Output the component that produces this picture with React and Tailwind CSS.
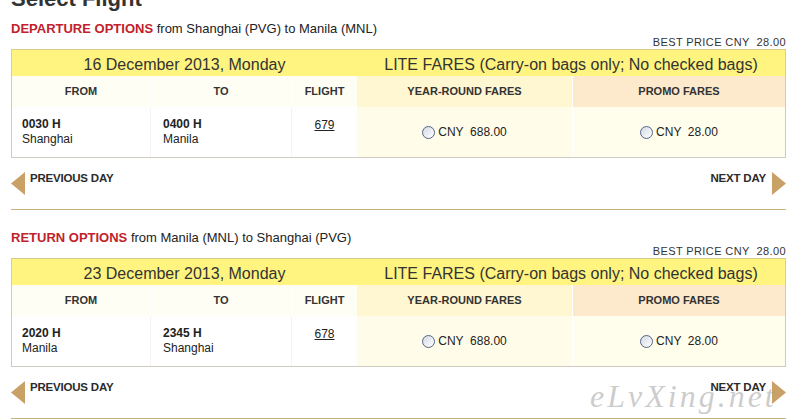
import React from 'react';

const sections = [
  {
    label: 'DEPARTURE OPTIONS',
    route: 'from Shanghai (PVG) to Manila (MNL)',
    date: '16 December 2013, Monday',
    dep: '0030 H',
    depCity: 'Shanghai',
    arr: '0400 H',
    arrCity: 'Manila',
    flight: '679',
  },
  {
    label: 'RETURN OPTIONS',
    route: 'from Manila (MNL) to Shanghai (PVG)',
    date: '23 December 2013, Monday',
    dep: '2020 H',
    depCity: 'Manila',
    arr: '2345 H',
    arrCity: 'Shanghai',
    flight: '678',
  },
];

const cols = 'grid grid-cols-[138px_141px_66px_215px_1fr]';

function Radio() {
  return (
    <span className="inline-block w-[13px] h-[13px] rounded-full border border-[#52668a] bg-linear-to-br from-[#d3d9e4] to-white shrink-0" />
  );
}

function Arrow({ dir }) {
  return (
    <svg width="14" height="23" viewBox="0 0 14 23" className="shrink-0">
      {dir === 'left' ? (
        <polygon points="14,0 14,23 0,11.5" fill="#c9a065" />
      ) : (
        <polygon points="0,0 0,23 14,11.5" fill="#c9a065" />
      )}
    </svg>
  );
}

function Section({ s, first }) {
  return (
    <div className={first ? 'pt-[10px]' : 'pt-[21px]'}>
      <div className="text-[13px] leading-[14px] h-[14px] text-[#222]">
        <span className="font-bold text-[#c1212b]">{s.label}</span> {s.route}
      </div>
      <div className="h-[13px] text-[11px] leading-[13px] text-[#333] text-right whitespace-pre tracking-[0.4px]">
        BEST PRICE CNY  28.00
      </div>

      <div className="border border-[#cfcbbf] border-t-[#d9cc88]">
        <div className="flex h-[26px] bg-[#fff47f] text-[16px] leading-[26px] pt-[2px] text-[#333]">
          <div className="w-[345px] text-center">{s.date}</div>
          <div className="flex-1 text-center">LITE FARES (Carry-on bags only; No checked bags)</div>
        </div>

        <div className={`${cols} h-[31px] text-[11px] font-bold text-[#333]`}>
          <div className="flex items-center justify-center bg-[#fffef4]">FROM</div>
          <div className="flex items-center justify-center bg-[#fffef4] border-l border-white">TO</div>
          <div className="flex items-center justify-center bg-[#fffef4] border-l border-white">FLIGHT</div>
          <div className="flex items-center justify-center bg-[#fff6d2]">YEAR-ROUND FARES</div>
          <div className="flex items-center justify-center bg-[#fde9cc] border-l border-white">PROMO FARES</div>
        </div>

        <div className={`${cols} h-[50px] text-[12px] leading-[15px] text-[#222]`}>
          <div className="flex flex-col justify-center pl-[10px] bg-white">
            <span className="font-bold">{s.dep}</span>
            <span>{s.depCity}</span>
          </div>
          <div className="flex flex-col justify-center pl-[12px] bg-white border-l border-[#f6f4ee]">
            <span className="font-bold">{s.arr}</span>
            <span>{s.arrCity}</span>
          </div>
          <div className="flex justify-center pt-[11px] bg-white border-l border-[#f6f4ee]">
            <span className="underline">{s.flight}</span>
          </div>
          <div className="flex items-center justify-center gap-[3px] bg-[#fffdea] pt-[1px]">
            <Radio />
            <span className="whitespace-pre">CNY  688.00</span>
          </div>
          <div className="flex items-center justify-center gap-[3px] bg-[#fffdeb] border-l border-white pt-[1px]">
            <Radio />
            <span className="whitespace-pre">CNY  28.00</span>
          </div>
        </div>
      </div>

      <div className="flex justify-between items-start h-[52px] pt-[14px] border-b border-[#c9b27c] text-[11.5px] leading-[12px] font-bold text-[#2b2b2b] tracking-[-0.2px]">
        <div className="flex items-start gap-[5px]">
          <Arrow dir="left" />
          <span>PREVIOUS DAY</span>
        </div>
        <div className="flex items-start gap-[6px]">
          <span>NEXT DAY</span>
          <Arrow dir="right" />
        </div>
      </div>
    </div>
  );
}

export default function App() {
  return (
    <div className="relative w-[796px] h-[420px] overflow-hidden bg-white font-['Liberation_Sans',Arial,sans-serif]">
      <h1 className="-mt-[14px] pl-[11px] text-[22px] leading-[26px] font-bold text-[#333]">Select Flight</h1>
      <div className="pl-[11px] pr-[10px]">
        {sections.map((s, i) => (
          <Section key={s.label} s={s} first={i === 0} />
        ))}
      </div>
      <div className="absolute left-[590px] top-[372px] text-[32px] italic font-['Liberation_Serif',serif] text-[#9a9a9a]/50 tracking-[3px] pointer-events-none">
        eLvXing.net
      </div>
    </div>
  );
}
